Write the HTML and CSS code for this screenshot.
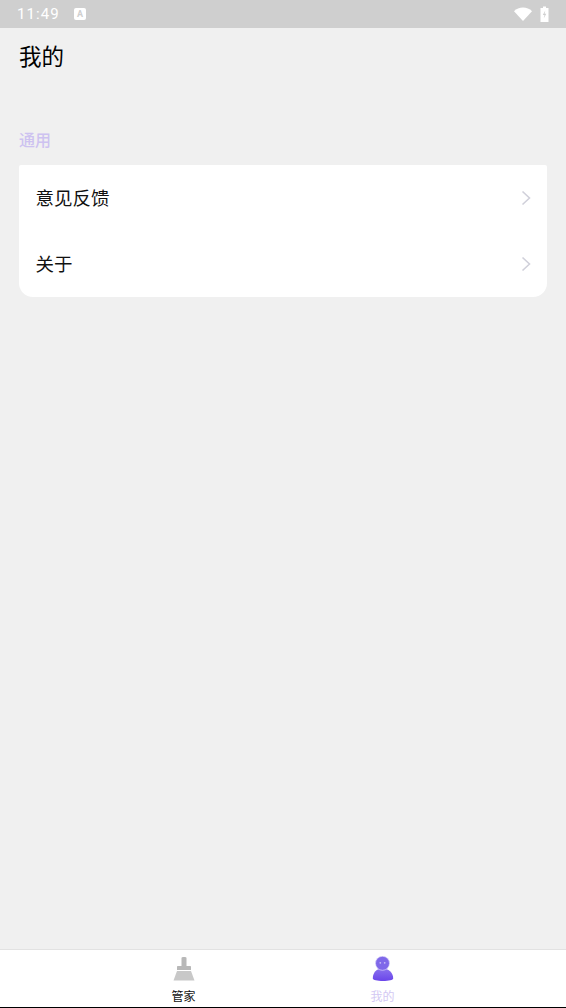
FILE: index.html
```html
<!DOCTYPE html>
<html lang="zh-CN">
<head>
    <meta charset="UTF-8">
    <meta name="viewport" content="width=device-width, initial-scale=1.0">
    <title>我的</title>
    <link rel="stylesheet" href="styles.css">
</head>
<body>
    <div class="app">
        <div class="status-bar">
            <span class="clock">11:49</span>
            <span class="notice-icon">A</span>
            <span class="status-right">
                <svg width="18" height="14" viewBox="0 0 18 14"><path d="M0 4.200C2.400 1.600 5.500 0.400 9 0.400s6.600 1.200 9 3.800L9 14z" fill="#fff"/></svg>
                <svg width="9" height="16" viewBox="0 0 9 16"><path d="M0.500 2h2.500V0.500h3V2h2.500v14H0.500z" fill="#fff"/><path d="M5.300 4.500L2.800 9h1.700L3.700 12.500l2.600-4.700H4.600z" fill="#cfcfcf"/></svg>
            </span>
        </div>

        <h1 class="page-title">我的</h1>

        <div class="section-title">通用</div>
        <div class="menu-card">
            <div class="menu-row">
                <span>意见反馈</span>
                <svg class="chevron" width="10" height="16" viewBox="0 0 10 16"><path d="M1.500 1.500L8.500 8L1.500 14.500" fill="none" stroke="#d0d0da" stroke-width="1.600"/></svg>
            </div>
            <div class="menu-row">
                <span>关于</span>
                <svg class="chevron" width="10" height="16" viewBox="0 0 10 16"><path d="M1.500 1.500L8.500 8L1.500 14.500" fill="none" stroke="#d0d0da" stroke-width="1.600"/></svg>
            </div>
        </div>

        <div class="tab-bar">
            <div class="tab">
                <svg width="24" height="26" viewBox="0 0 24 26"><path d="M9.500 2c0-.6 1-1 2.500-1s2.500 .4 2.500 1v8H18c.6 0 1 .4 1 1v3H5v-3c0-.6 .4-1 1-1h3.500z" fill="#b8b8b8"/><path d="M5 15h14l3.500 9.500h-21z" fill="#c8c8c8"/></svg>
                <span class="tab-label">管家</span>
            </div>
            <div class="tab">
                <svg width="22" height="26" viewBox="0 0 22 26">
                    <defs>
                        <linearGradient id="userFill" x1="0" y1="0" x2="0" y2="1">
                            <stop offset="0" stop-color="#8a72ee"/>
                            <stop offset="1" stop-color="#6a45ea"/>
                        </linearGradient>
                    </defs>
                    <path d="M0.800 22.500C0.800 16.500 4.500 12.500 10.500 12.500s10.700 4 10.700 10c0 1.500-4.500 2.500-10.200 2.500S.8 24 .8 22.500z" fill="url(#userFill)"/>
                    <circle cx="10.500" cy="7.300" r="7" fill="#7f68e9" stroke="#e6e0fb" stroke-width="0.600"/>
                    <circle cx="8.300" cy="6.800" r="0.900" fill="#c9bdf6"/>
                    <circle cx="12.700" cy="6.800" r="0.900" fill="#c9bdf6"/>
                </svg>
                <span class="tab-label active">我的</span>
            </div>
        </div>
        <div class="nav-line"></div>
    </div>
</body>
</html>
```

FILE: styles.css
```css
* {
    box-sizing: border-box;
}
html, body {
    margin: 0;
    height: 100%;
}
body {
    font-family: "Noto Sans CJK SC", "Roboto", sans-serif;
    background-color: #f0f0f0;
    color: #111;
}
.app {
    height: 1008px;
    display: flex;
    flex-direction: column;
    overflow: hidden;
}
.status-bar {
    height: 28px;
    flex: none;
    background-color: #cfcfcf;
    color: #fff;
    display: flex;
    align-items: center;
    padding: 0 17px 0 17px;
}
.clock {
    font-family: Roboto, sans-serif;
    font-size: 15px;
    line-height: 30px;
    letter-spacing: 1.1px;
    width: 57px;
}
.notice-icon {
    width: 12px;
    height: 12px;
    background-color: #fff;
    color: #cfcfcf;
    border-radius: 2px;
    font-family: Roboto, sans-serif;
    font-size: 9px;
    font-weight: bold;
    line-height: 12px;
    text-align: center;
}
.status-right {
    margin-left: auto;
    display: flex;
    align-items: center;
    gap: 8px;
}
.page-title {
    margin: 0;
    padding: 11px 0 0 19px;
    height: 93px;
    flex: none;
    font-size: 22.5px;
    font-weight: normal;
    line-height: 33px;
    color: #000;
}
.section-title {
    padding-left: 19px;
    height: 44px;
    flex: none;
    font-size: 16px;
    font-weight: 500;
    line-height: 37px;
    color: #cdc2f0;
}
.menu-card {
    margin: 0 19px;
    flex: none;
    background-color: #fff;
    border-radius: 2px 2px 14px 14px;
}
.menu-row {
    height: 66px;
    display: flex;
    align-items: center;
    justify-content: space-between;
    padding: 0 16px 2px 16.5px;
    font-size: 18.5px;
    color: #111;
}
.chevron {
    margin-top: 2px;
}
.tab-bar {
    margin-top: auto;
    height: 58px;
    flex: none;
    background-color: #fff;
    border-top: 1px solid #e2e2e2;
    display: flex;
    padding: 6px 84px 0;
}
.tab {
    flex: 1;
    display: flex;
    flex-direction: column;
    align-items: center;
    gap: 5px;
}
.tab-label {
    font-size: 12px;
    line-height: 17px;
    color: #111;
}
.tab-label.active {
    color: #d3c8f3;
}
.nav-line {
    height: 1px;
    flex: none;
    background-color: #000;
}
```
